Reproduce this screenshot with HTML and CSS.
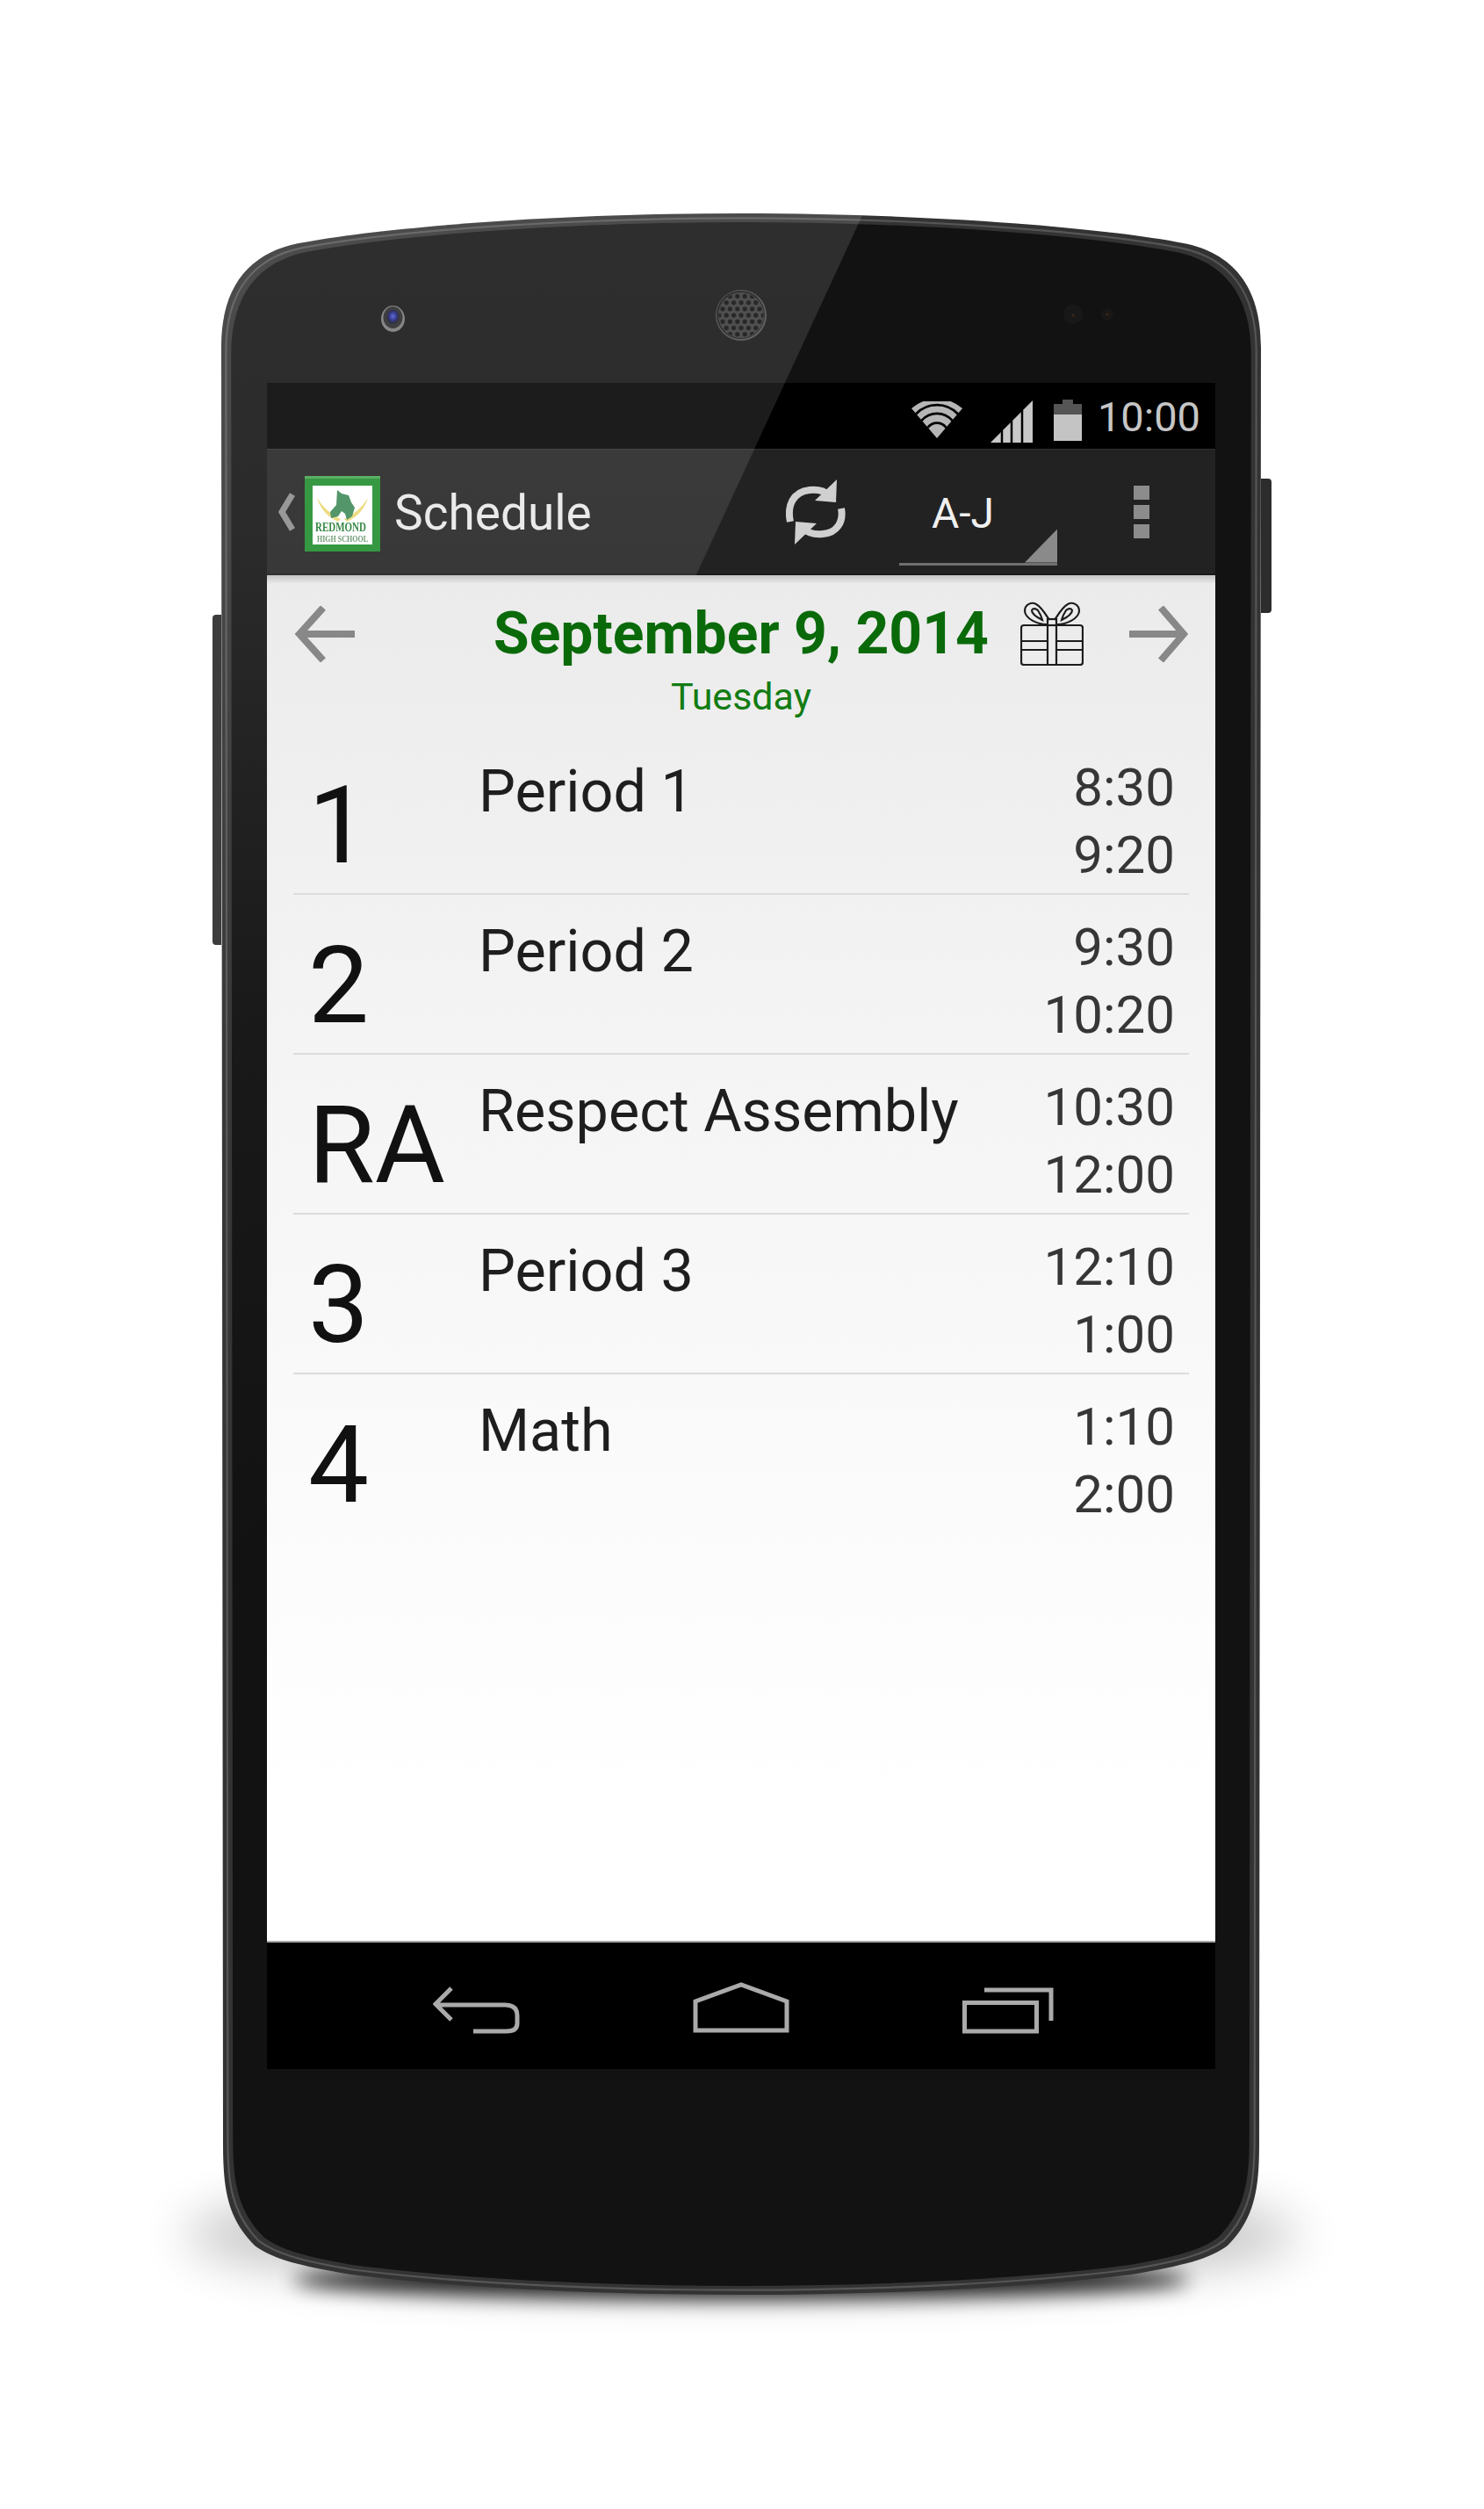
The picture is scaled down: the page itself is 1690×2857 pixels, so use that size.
FILE: index.html
```html
<!DOCTYPE html>
<html lang="en">
<head>
  <meta charset="UTF-8">
  <title>Schedule</title>
  <link rel="stylesheet" href="styles.css">
</head>
<body>
  <div class="device">
    <!-- phone body, drawn on the page canvas -->
    <svg class="shell" width="1690" height="2857" viewBox="0 0 1690 2857">
      <defs>
        <path id="outline" d="M844 243C1048 243 1248 258 1348 277C1403 288 1436 325 1436 395L1434 2440C1434 2490 1430 2525 1398 2557C1378 2572 1348 2580 1288 2590C1168 2605 1008 2613 844 2613C680 2613 520 2605 400 2590C340 2580 310 2572 290 2557C258 2525 254 2490 254 2440L252 395C252 325 285 288 340 277C440 258 640 243 844 243Z"/>
        <filter id="blurNear" x="-20%" y="-200%" width="140%" height="500%"><feGaussianBlur stdDeviation="11"/></filter>
        <filter id="blurFar" x="-20%" y="-100%" width="140%" height="300%"><feGaussianBlur stdDeviation="28"/></filter>
        <pattern id="holes" x="844" y="359" width="8.400" height="14.400" patternUnits="userSpaceOnUse">
          <circle cx="0" cy="0" r="2.700" fill="#0b0b0b"/>
          <circle cx="8.400" cy="0" r="2.700" fill="#0b0b0b"/>
          <circle cx="4.200" cy="7.200" r="2.700" fill="#0b0b0b"/>
          <circle cx="0" cy="14.400" r="2.700" fill="#0b0b0b"/>
          <circle cx="8.400" cy="14.400" r="2.700" fill="#0b0b0b"/>
        </pattern>
        <radialGradient id="lens" cx="50%" cy="45%" r="50%">
          <stop offset="0" stop-color="#4a5cd0"/>
          <stop offset=".6" stop-color="#1b1f7a"/>
          <stop offset="1" stop-color="#15151f"/>
        </radialGradient>
      </defs>

      <ellipse cx="844" cy="2545" rx="635" ry="62" fill="#000" opacity=".24" filter="url(#blurFar)"/>
      <ellipse cx="844" cy="2596" rx="510" ry="22" fill="#000" opacity=".85" filter="url(#blurNear)"/>

      <path d="M252 700H246Q242 700 242 704V1072Q242 1076 246 1076H252Z" fill="#3c3c3c"/>
      <path d="M1436 545H1444Q1448 545 1448 549V694Q1448 698 1444 698H1436Z" fill="#2c2c2c"/>

      <use href="#outline" fill="#333"/>
      <use href="#outline" fill="none" stroke="#565656" stroke-width="2.200" transform="translate(844 1428) scale(.991 .9955) translate(-844 -1428)"/>
      <use href="#outline" fill="#121212" transform="translate(844 1428) scale(.981 .9915) translate(-844 -1428)"/>

      <ellipse cx="447.500" cy="363" rx="13.500" ry="15" fill="#777"/>
      <ellipse cx="447.500" cy="361.500" rx="11" ry="12.500" fill="#26262a"/>
      <ellipse cx="447.500" cy="361" rx="7" ry="8" fill="url(#lens)"/>

      <circle cx="844" cy="359" r="29" fill="#4c4c4c"/>
      <circle cx="843.500" cy="358.500" r="27.500" fill="#161616"/>
      <circle cx="844" cy="359" r="26" fill="#3a3a3a"/>
      <circle cx="844" cy="359" r="25.500" fill="url(#holes)"/>

      <circle cx="1222" cy="358" r="11" fill="#181818"/>
      <circle cx="1261" cy="358" r="7" fill="#191817"/>
      <circle cx="1222" cy="359" r="1.500" fill="#3d2a1c"/>
      <circle cx="1261" cy="358" r="1.500" fill="#3d2a1c"/>
    </svg>

    <div class="screen">
      <div class="status-bar">
        <svg class="wifi" width="58" height="42" viewBox="0 0 58 42">
          <path d="M0 8A44 44 0 0 1 58 8L29 42Z" fill="#b6b6b6"/>
          <path d="M5 14.500A33 33 0 0 1 53 14.500M11.500 22A23 23 0 0 1 46.500 22M18.500 30A13 13 0 0 1 39.500 30" fill="none" stroke="#000" stroke-width="2.800"/>
        </svg>
        <svg class="signal" width="48" height="48" viewBox="0 0 48 48">
          <path d="M0 48L48 0V48Z" fill="#c8c8c8"/>
          <path d="M13 34V48M24 23V48M36 11V48" stroke="#000" stroke-width="2.500"/>
        </svg>
        <svg class="battery" width="32" height="47" viewBox="0 0 32 47">
          <path d="M0 5H10V0H22V5H32V47H0Z" fill="#c4c4c4"/>
          <path d="M0 5H10V0H22V5H32V17H0Z" fill="#555"/>
        </svg>
        <span class="clock">10:00</span>
      </div>

      <div class="action-bar">
        <svg class="caret" width="22" height="44" viewBox="0 0 22 44">
          <path d="M17 2L5 22L17 42" fill="none" stroke="#8c8c8c" stroke-width="7"/>
        </svg>
        <svg class="logo" width="86" height="86" viewBox="0 0 86 86">
          <rect width="86" height="86" fill="#1f8c2c"/>
          <rect width="86" height="3" fill="#47a650"/>
          <rect x="9" y="11" width="68" height="67" fill="#fff"/>
          <path d="M14 25Q20 44 38 52L41 49Q24 41 14 25ZM72 25Q66 44 48 52L45 49Q62 41 72 25Z" fill="#ecd873"/>
          <path d="M37 16L42 20L50 22L53 30L57 36L54 46L48 50L46 43L42 40L38 46L30 48L29 41L36 33Z" fill="#3f8a58"/>
          <text class="logo-name" transform="translate(12 63) scale(1 1.35)">REDMOND</text>
          <text class="logo-school" transform="translate(14 75) scale(1 1.25)">HIGH SCHOOL</text>
        </svg>
        <span class="screen-title">Schedule</span>
        <div class="actions">
          <svg class="sync" width="68" height="74" viewBox="0 0 68 74">
            <path d="M5 48C1 30 8 14 27 12C38 11 44 13 49 18" fill="none" stroke="#d0d0d0" stroke-width="8"/>
            <path d="M58 0L57 26L33 24Z" fill="#d0d0d0"/>
            <path d="M63 33C66 48 58 61 42 62C31 63 25 61 20 56" fill="none" stroke="#d0d0d0" stroke-width="8"/>
            <path d="M10 74L11 48L35 50Z" fill="#d0d0d0"/>
          </svg>
          <div class="spinner">A-J</div>
          <svg class="overflow" width="18" height="60" viewBox="0 0 18 60">
            <path d="M0 0H18V16H0ZM0 22H18V38H0ZM0 44H18V60H0Z" fill="#8c8c8c"/>
          </svg>
        </div>
      </div>

      <div class="content">
        <div class="day-head">
          <svg class="arrow" width="69" height="64" viewBox="0 0 69 64">
            <path d="M69 32H8M33 2L6 32L33 62" fill="none" stroke="#888" stroke-width="8"/>
          </svg>
          <div class="day-label">
            <div class="day-date">September 9, 2014</div>
            <div class="day-name">Tuesday</div>
          </div>
          <div class="day-tools">
            <svg class="gift" width="72" height="73" viewBox="0 0 72 73">
              <g fill="none" stroke="#1c1c1c" stroke-width="2.200">
                <rect x="1" y="27" width="70" height="45" rx="3"/>
                <path d="M1 45H31M1 55H31M41 45H71M41 55H71M31 27V72M41 27V72"/>
                <rect x="31" y="20" width="10" height="7"/>
                <path d="M30 26C20 26 6 20 5 11C5 3 13 0 18 3C24 6 29 15 33 21"/>
                <path d="M42 26C52 26 66 20 67 11C67 3 59 0 54 3C48 6 43 15 39 21"/>
                <path d="M25 21C19 18 13 14 13 10C14 7 18 8 20 10C22 13 24 17 25 21Z"/>
                <path d="M47 21C53 18 59 14 59 10C58 7 54 8 52 10C50 13 48 17 47 21Z"/>
              </g>
            </svg>
            <svg class="arrow" width="67" height="64" viewBox="0 0 67 64">
              <path d="M0 32H60M36 2L62 32L36 62" fill="none" stroke="#888" stroke-width="8"/>
            </svg>
          </div>
        </div>

        <div class="periods">
          <div class="period">
            <div class="period-num">1</div>
            <div class="period-name">Period 1</div>
            <div class="period-time">8:30<br>9:20</div>
          </div>
          <div class="period">
            <div class="period-num">2</div>
            <div class="period-name">Period 2</div>
            <div class="period-time">9:30<br>10:20</div>
          </div>
          <div class="period">
            <div class="period-num">RA</div>
            <div class="period-name">Respect Assembly</div>
            <div class="period-time">10:30<br>12:00</div>
          </div>
          <div class="period">
            <div class="period-num">3</div>
            <div class="period-name">Period 3</div>
            <div class="period-time">12:10<br>1:00</div>
          </div>
          <div class="period">
            <div class="period-num">4</div>
            <div class="period-name">Math</div>
            <div class="period-time">1:10<br>2:00</div>
          </div>
        </div>
      </div>

      <div class="nav-bar">
        <svg class="nav-back" width="100" height="54" viewBox="0 0 100 54">
          <path d="M21 2L3 20L21 38M3 21H82Q96 21 96 33V42Q96 51 84 51H46" fill="none" stroke="#aaa" stroke-width="5"/>
        </svg>
        <svg class="nav-home" width="110" height="58" viewBox="0 0 110 58">
          <path d="M3 55V22L55 3L107 22V55Z" fill="none" stroke="#aaa" stroke-width="5"/>
        </svg>
        <svg class="nav-recent" width="104" height="54" viewBox="0 0 104 54">
          <path d="M2.500 18.500H84.500V51H2.500Z" fill="none" stroke="#aaa" stroke-width="5"/>
          <path d="M25 4H101V39" fill="none" stroke="#aaa" stroke-width="5"/>
        </svg>
      </div>
    </div>

    <!-- glass reflection: over the bezel and the dark bars, under the content -->
    <svg class="sheen" width="1690" height="2857" viewBox="0 0 1690 2857">
      <defs>
        <clipPath id="shellClip">
          <path d="M844 243C1048 243 1248 258 1348 277C1403 288 1436 325 1436 395L1434 2440C1434 2490 1430 2525 1398 2557C1378 2572 1348 2580 1288 2590C1168 2605 1008 2613 844 2613C680 2613 520 2605 400 2590C340 2580 310 2572 290 2557C258 2525 254 2490 254 2440L252 395C252 325 285 288 340 277C440 258 640 243 844 243Z"/>
        </clipPath>
        <linearGradient id="sheenFade" gradientUnits="userSpaceOnUse" x1="0" y1="243" x2="0" y2="1800">
          <stop offset="0" stop-color="#fff" stop-opacity=".12"/>
          <stop offset=".23" stop-color="#fff" stop-opacity=".105"/>
          <stop offset=".6" stop-color="#fff" stop-opacity=".03"/>
          <stop offset="1" stop-color="#fff" stop-opacity="0"/>
        </linearGradient>
      </defs>
      <polygon points="240,230 989,230 250,1830 240,1830" fill="url(#sheenFade)" clip-path="url(#shellClip)"/>
    </svg>
  </div>
</body>
</html>
```

FILE: styles.css
```css
html, body {
  margin: 0;
  background: #fff;
}

body {
  font-family: Roboto, 'Liberation Sans', sans-serif;
}

.device {
  position: relative;
  box-sizing: border-box;
  width: 1690px;
  height: 2857px;
  padding: 436px 0 0 304px;
  overflow: hidden;
}

.shell,
.sheen {
  position: absolute;
  left: 0;
  top: 0;
}

.sheen {
  z-index: 1;
  pointer-events: none;
}

.screen {
  position: relative;
  width: 1080px;
  height: 1920px;
  display: flex;
  flex-direction: column;
}

/* status bar */
.status-bar {
  height: 75px;
  background: #000;
  display: flex;
  align-items: center;
  padding-right: 17px;
  justify-content: flex-end;
  box-sizing: border-box;
}

.wifi { margin-top: 9px; }
.signal { margin: 13px 0 0 32px; }
.battery { margin: 9px 0 0 24px; }

.clock {
  margin: 2px 0 0 18px;
  color: #c6c6c6;
  font-size: 47px;
  line-height: 75px;
}

/* action bar */
.action-bar {
  height: 144px;
  box-sizing: border-box;
  background: #222;
  border-top: 1px solid #303030;
  border-bottom: 2px solid #1a1a1a;
  display: flex;
  align-items: center;
  padding-left: 12px;
}

.logo {
  margin: 4px 0 0 9px;
  filter: blur(.5px);
}

.screen-title {
  margin: 3px 0 0 16px;
  color: #e8e8e8;
  font-size: 55px;
}

.actions {
  margin-left: auto;
  padding-right: 75px;
  height: 100%;
  display: flex;
  align-items: center;
}

.spinner {
  position: relative;
  box-sizing: border-box;
  width: 180px;
  height: 79px;
  margin: 43px 0 0 61px;
  padding-left: 37px;
  border-bottom: 3px solid #707070;
  color: #f0f0f0;
  font-size: 48px;
  line-height: 40px;
}

.spinner::after {
  content: "";
  position: absolute;
  right: 0;
  bottom: 0;
  width: 37px;
  height: 38px;
  background: #8a8a8a;
  clip-path: polygon(100% 0, 100% 100%, 0 100%);
}

.overflow { margin-left: 87px; }

/* content */
.content {
  position: relative;
  z-index: 2;
  flex: 1;
  box-sizing: border-box;
  border-bottom: 2px solid #a8a8a8;
  background:
    linear-gradient(#c4c4c4, rgba(232, 232, 232, 0) 10px),
    linear-gradient(#ebebeb, #f3f3f3 30%, #fbfbfb 68%, #fff 90%);
}

.day-head {
  box-sizing: border-box;
  height: 182px;
  padding: 28px 31px 0 31px;
  display: grid;
  grid-template-columns: 1fr auto 1fr;
  align-items: start;
}

.arrow { margin-top: 7px; }

.day-label { text-align: center; }

.day-date {
  color: #0a6a0a;
  font-size: 66px;
  line-height: 78px;
  font-weight: 700;
}

.day-name {
  margin-top: 7px;
  color: #137c13;
  font-size: 43px;
  line-height: 50px;
}

.day-tools {
  display: flex;
  justify-content: flex-end;
  gap: 52px;
}

.gift { margin-top: 2px; }

/* period rows */
.periods { margin: 0 30px; }

.period {
  box-sizing: border-box;
  height: 182px;
  padding: 0 16px 0 17px;
  border-bottom: 2px solid #dcdcdc;
  display: grid;
  grid-template-columns: 194px 1fr auto;
  align-items: start;
}

.period:last-child { border-bottom: none; }

.period-num {
  padding-top: 43px;
  color: #111;
  font-size: 123px;
  line-height: 120px;
  white-space: nowrap;
}

.period-name {
  padding-top: 25px;
  color: #1e1e1e;
  font-size: 66.500px;
  line-height: 78px;
}

.period-time {
  padding-top: 21px;
  color: #363636;
  font-size: 60px;
  line-height: 77px;
  text-align: right;
}

/* nav bar */
.nav-bar {
  position: relative;
  z-index: 2;
  height: 144px;
  background: #000;
  display: flex;
  align-items: flex-start;
  padding: 45px 0 0 189px;
  box-sizing: border-box;
}

.nav-back { margin-top: 5px; }
.nav-home { margin-left: 196px; }
.nav-recent { margin: 5px 0 0 197px; }

.logo-name {
  font-family: 'Liberation Serif', serif;
  font-size: 11px;
  font-weight: 700;
  fill: #1f7a30;
}

.logo-school {
  font-family: 'Liberation Serif', serif;
  font-size: 8px;
  font-weight: 700;
  fill: #5f8f66;
}
```
